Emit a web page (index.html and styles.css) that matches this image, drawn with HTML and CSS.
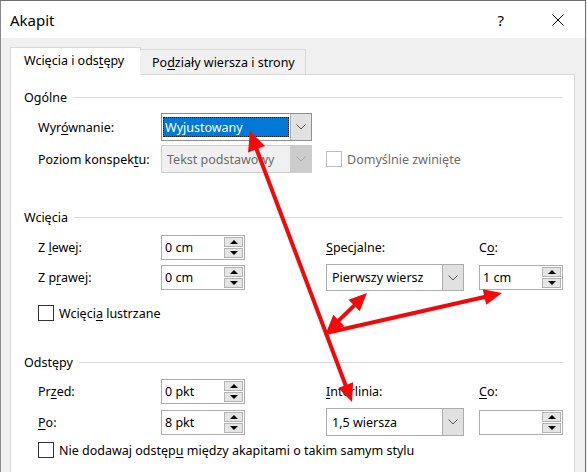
FILE: index.html
```html
<!DOCTYPE html>
<html lang="pl">
<head>
<meta charset="utf-8">
<title>Akapit</title>
<link rel="stylesheet" href="styles.css">
</head>
<body>
<div class="window">
  <div class="titlebar">
    <span class="title">Akapit</span>
    <span class="tb-help">?</span>
    <span class="tb-close"><svg width="12" height="12" viewBox="0 0 12 12"><path d="M0.5 0.5 L11.5 11.5 M11.5 0.5 L0.5 11.5" stroke="#000" stroke-width="1" fill="none"/></svg></span>
  </div>
  <div class="client">
    <div class="tabs">
      <div class="tab active">Wcięcia i ods<u>t</u>ępy</div>
      <div class="tab">Po<u>d</u>ziały wiersza i strony</div>
    </div>
    <div class="panel">
      <section class="group">
        <div class="group-title"><span>Ogólne</span><i class="rule"></i></div>
        <div class="grid grid-general">
          <label class="lbl">Wyr<u>ó</u>wnanie:</label>
          <div class="select select-wide focus">
            <div class="value"><span class="hl">Wyjustowany</span></div>
            <div class="btn"><svg width="10" height="6" viewBox="0 0 10 6"><path d="M0.5 0.5 L5 5 L9.5 0.5" stroke="#555" fill="none"/></svg></div>
          </div>
          <span></span><span></span>
          <label class="lbl">Poziom konspek<u>t</u>u:</label>
          <div class="select select-wide disabled">
            <div class="value">Tekst podstawowy</div>
            <div class="btn"><svg width="10" height="6" viewBox="0 0 10 6"><path d="M0.5 0.5 L5 5 L9.5 0.5" stroke="#a8a8a8" fill="none"/></svg></div>
          </div>
          <div class="check check-disabled span2"><span class="box"></span><span>Domyślnie zwinięte</span></div>
        </div>
      </section>

      <section class="group g-indent">
        <div class="group-title"><span>Wcięcia</span><i class="rule"></i></div>
        <div class="grid grid-indent">
          <label class="lbl">Z <u>l</u>ewej:</label>
          <div class="spin"><div class="value">0 cm</div><div class="arrows"><span class="up"></span><span class="down"></span></div></div>
          <label class="lbl"><u>S</u>pecjalne:</label>
          <label class="lbl">C<u>o</u>:</label>
          <label class="lbl">Z p<u>r</u>awej:</label>
          <div class="spin"><div class="value">0 cm</div><div class="arrows"><span class="up"></span><span class="down"></span></div></div>
          <div class="select select-narrow">
            <div class="value">Pierwszy wiersz</div>
            <div class="btn"><svg width="10" height="6" viewBox="0 0 10 6"><path d="M0.5 0.5 L5 5 L9.5 0.5" stroke="#555" fill="none"/></svg></div>
          </div>
          <div class="spin"><div class="value">1 cm</div><div class="arrows"><span class="up"></span><span class="down"></span></div></div>
          <div class="check span4"><span class="box"></span><span>Wcięci<u>a</u> lustrzane</span></div>
        </div>
      </section>

      <section class="group g-spacing">
        <div class="group-title"><span>Odstępy</span><i class="rule"></i></div>
        <div class="grid grid-spacing">
          <label class="lbl">Pr<u>z</u>ed:</label>
          <div class="spin"><div class="value">0 pkt</div><div class="arrows"><span class="up"></span><span class="down"></span></div></div>
          <label class="lbl"><u>I</u>nterlinia:</label>
          <label class="lbl"><u>C</u>o:</label>
          <label class="lbl"><u>P</u>o:</label>
          <div class="spin"><div class="value">8 pkt</div><div class="arrows"><span class="up"></span><span class="down"></span></div></div>
          <div class="select select-narrow tall">
            <div class="value">1,5 wiersza</div>
            <div class="btn"><svg width="10" height="6" viewBox="0 0 10 6"><path d="M0.5 0.5 L5 5 L9.5 0.5" stroke="#555" fill="none"/></svg></div>
          </div>
          <div class="spin"><div class="value"></div><div class="arrows"><span class="up"></span><span class="down"></span></div></div>
          <div class="check span4"><span class="box"></span><span>Nie dodawaj odstęp<u>u</u> między akapitami o takim samym stylu</span></div>
        </div>
      </section>
    </div>
  </div>

  <svg class="annot" width="587" height="472" viewBox="0 0 587 472">
    <g stroke="#f20a0a" stroke-width="4" stroke-linecap="round" fill="none">
      <line x1="256.4" y1="148.8" x2="345.6" y2="385.2"/>
      <line x1="338.9" y1="320.4" x2="354.1" y2="305.6"/>
      <line x1="326" y1="333" x2="484.5" y2="297"/>
    </g>
    <g fill="#f20a0a">
      <polygon points="250,131 265,146 248,152.5"/>
      <polygon points="352,402 353.1,382.3 338.2,388"/>
      <polygon points="367,293 359.7,311.3 348.5,299.8"/>
      <polygon points="326,333 344.5,326.2 333.3,314.7"/>
      <polygon points="502,293 486.2,304.8 482.7,289.2"/>
    </g>
  </svg>
</div>
</body>
</html>
```

FILE: styles.css
```css
html, body {
  margin: 0;
  padding: 0;
}
body {
  background: #f0f0f0;
  font-family: "Noto Sans", "Open Sans", sans-serif;
  font-size: 12.5px;
  color: #000;
}
u { text-decoration: underline; text-underline-offset: 2px; }

.window {
  position: relative;
  width: 586px;
  height: 472px;
  box-sizing: border-box;
  border-top: 1px solid #6f6f6f;
  border-left: 1px solid #8a8a8a;
  border-right: 1px solid #6f6f6f;
  background: #f0f0f0;
  overflow: hidden;
}

.titlebar {
  height: 37px;
  background: #fff;
  display: flex;
  align-items: center;
  position: relative;
}
.title {
  font-size: 15px;
  margin-left: 9px;
}
.tb-help {
  margin-left: auto;
  font-size: 15px;
  margin-right: 48px;
}
.tb-close {
  display: flex;
  margin-right: 21px;
}

.client {
  padding-top: 9px;
}

.tabs {
  display: flex;
  align-items: flex-end;
  margin-left: 9px;
  height: 27px;
  position: relative;
  z-index: 1;
}
.tab {
  box-sizing: border-box;
  border: 1px solid #d9d9d9;
  border-bottom: none;
  display: flex;
  align-items: center;
  white-space: nowrap;
}
.tab.active {
  background: #fff;
  height: 28px;
  width: 131px;
  padding-left: 13px;
  margin-bottom: -1px;
  padding-bottom: 2px;
}
.tab:not(.active) {
  background: #f0f0f0;
  height: 25px;
  width: 166px;
  margin-left: -1px;
  padding-left: 12px;
  border-left: none;
}

.panel {
  margin-left: 9px;
  width: 565px;
  height: 420px;
  box-sizing: border-box;
  border: 1px solid #d9d9d9;
  background: #fff;
  padding: 14px 11px 0 13px;
}

.group-title {
  display: flex;
  align-items: center;
  height: 16px;
}
.group-title .rule {
  flex: 1;
  border-top: 1px solid #dcdcdc;
  margin-left: 6px;
  margin-top: 1px;
}

.grid {
  display: grid;
  grid-template-columns: 123px 165px 153px 84px;
  margin-left: 14px;
  align-items: center;
}
.grid-general {
  margin-top: 8px;
  grid-template-rows: 28px 28px;
  row-gap: 4px;
}
.g-indent { margin-top: 36px; }
.grid-indent {
  margin-top: 9px;
  grid-template-rows: 26px 27px auto;
  row-gap: 4px;
}
.grid-indent .check { margin-top: 10px; }
.g-spacing { margin-top: 33px; }
.grid-spacing {
  margin-top: 8px;
  grid-template-rows: 26px 28px auto;
  row-gap: 4px;
}
.grid-spacing .check { margin-top: 2px; }

.lbl { white-space: nowrap; }
.span2 { grid-column: span 2; }
.span4 { grid-column: span 4; }

.select {
  box-sizing: border-box;
  display: flex;
  height: 28px;
  border: 1px solid #adadad;
  background: #fff;
}
.select-wide { width: 151px; }
.select-narrow { width: 138px; height: 27px; }
.select-narrow.tall { height: 28px; }
.select .value {
  flex: 1;
  display: flex;
  align-items: center;
  padding-left: 5px;
  white-space: nowrap;
  overflow: hidden;
}
.select .btn {
  width: 20px;
  background: #e1e1e1;
  border-left: 1px solid #adadad;
  display: flex;
  align-items: center;
  justify-content: center;
}
.select.focus { border-color: #8f8f8f; }
.select.focus .value { padding: 3px 1px; }
.select.focus .hl {
  background: #0078d7;
  color: #fff;
  display: flex;
  align-items: center;
  height: 100%;
  width: 100%;
  box-sizing: border-box;
  padding-left: 2px;
  outline: 1px dotted #222;
  outline-offset: -1px;
}
.select.disabled {
  border-color: #cccccc;
  background: #f0f0f0;
  color: #6d6d6d;
}
.select.disabled .btn {
  background: #cccccc;
  border-left-color: #cccccc;
}

.spin {
  box-sizing: border-box;
  width: 84px;
  height: 25px;
  border: 1px solid #adadad;
  background: #fff;
  display: flex;
}
.spin .value {
  flex: 1;
  display: flex;
  align-items: center;
  padding-left: 3px;
}
.spin .arrows {
  width: 19px;
  display: flex;
  flex-direction: column;
  margin: 1px 1px 1px 0;
  gap: 1px;
}
.spin .arrows span {
  flex: 1;
  background: #e5e5e5;
  border: 1px solid #b4b4b4;
  position: relative;
}
.spin .arrows span::after {
  content: "";
  position: absolute;
  left: 50%;
  top: 50%;
  width: 0;
  height: 0;
  border-left: 4px solid transparent;
  border-right: 4px solid transparent;
  transform: translate(-50%, -50%);
}
.spin .arrows .up::after { border-bottom: 4px solid #000; }
.spin .arrows .down::after { border-top: 4px solid #000; }

.check {
  display: flex;
  align-items: center;
  height: 16px;
  white-space: nowrap;
}
.check .box {
  box-sizing: border-box;
  width: 16px;
  height: 16px;
  border: 1px solid #333;
  background: #fff;
  margin-right: 5px;
  flex: none;
}
.check-disabled { color: #6d6d6d; }
.check-disabled .box { border-color: #bcbcbc; }

.annot {
  position: absolute;
  left: -1px;
  top: -1px;
  pointer-events: none;
}
```
